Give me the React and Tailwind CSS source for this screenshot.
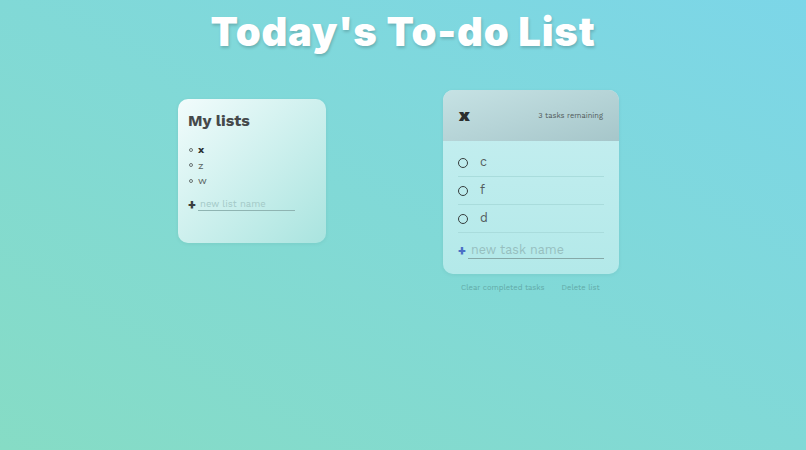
export default function App() {
  const font = { fontFamily: '"Work Sans", Inter, "Noto Sans", sans-serif' };
  return (
    <div
      className="w-[806px] h-[450px] overflow-hidden bg-[linear-gradient(to_top_right,#86dcc5,#7cd6e8)]"
      style={font}
    >
      <h1
        className="text-center text-white text-[40px] leading-none font-black pt-[12px] tracking-[0.8px] [text-shadow:1px_2px_3px_rgba(0,0,0,0.18)]"
        style={{ fontFamily: 'Inter, "Noto Sans", sans-serif' }}
      >
        Today's To-do List
      </h1>
      <div className="flex items-start pl-[178px] gap-[117px] mt-[38px]">
        {/* My lists */}
        <div className="mt-[9px] w-[148px] h-[144px] rounded-[10px] bg-[linear-gradient(to_bottom_right,#f2fcfc,#a9e4df)] shadow-[0_1px_4px_rgba(0,0,0,0.06)] px-[10px] pt-[12px]">
          <h2 className="text-[16px] leading-[20px] font-bold text-[#45494a]">My lists</h2>
          <ul className="mt-[11px] flex flex-col text-[10.5px] leading-[15.5px] text-[#5a6464]">
            {["x", "z", "w"].map((t, i) => (
              <li key={t} className="flex items-center gap-[5px] h-[15.5px]">
                <span className="w-[4px] h-[4px] rounded-full border border-[#6a7474] ml-[1px]"></span>
                <span className={i === 0 ? "font-bold text-[#2f3434]" : ""}>{t}</span>
              </li>
            ))}
          </ul>
          <div className="mt-[9px] flex items-center gap-[2px]">
            <span className="text-[13px] leading-none font-black text-[#3a3f40] w-[8px]">+</span>
            <div className="w-[97px] border-b-[1.5px] border-[#8fb4b2] text-[9.5px] leading-[12px] text-[#a3c9c7] pl-[2px]">
              new list name
            </div>
          </div>
        </div>

        {/* Task list */}
        <div className="flex flex-col">
          <div className="w-[176px] h-[184px] rounded-[10px] overflow-hidden bg-[linear-gradient(to_bottom,#c7eff1,#b3e9e9)] shadow-[0_1px_4px_rgba(0,0,0,0.06)]">
            <div className="h-[51px] bg-[linear-gradient(to_bottom_right,#c6e2e4,#a6c6ca)] flex items-center justify-between pl-[16px] pr-[16px]">
              <span className="text-[17px] font-black text-[#2b2f30] leading-none">x</span>
              <span className="text-[7.5px] text-[#4f5858]">3 tasks remaining</span>
            </div>
            <div className="px-[15px] pt-[8px]">
              {["c", "f", "d"].map((t) => (
                <div key={t} className="h-[28px] flex items-center gap-[12px] border-b border-[#a9dcdc]">
                  <span className="w-[10px] h-[10px] rounded-full border-[1.6px] border-[#363e3e]"></span>
                  <span className="text-[12.5px] text-[#535c5c]">{t}</span>
                </div>
              ))}
              <div className="mt-[9px] flex items-center gap-[2px]">
                <span className="text-[13px] leading-none font-black text-[#4a6fc6] w-[8px]">+</span>
                <div className="w-[136px] border-b-[1.5px] border-[#86a9a8] text-[12.5px] leading-[16px] text-[#97bfbf] pl-[3px]">
                  new task name
                </div>
              </div>
            </div>
          </div>
          <div className="flex gap-[17px] pl-[18px] mt-[8px] text-[7.6px] text-[#62a9a7]">
            <span>Clear completed tasks</span>
            <span>Delete list</span>
          </div>
        </div>
      </div>
    </div>
  );
}
